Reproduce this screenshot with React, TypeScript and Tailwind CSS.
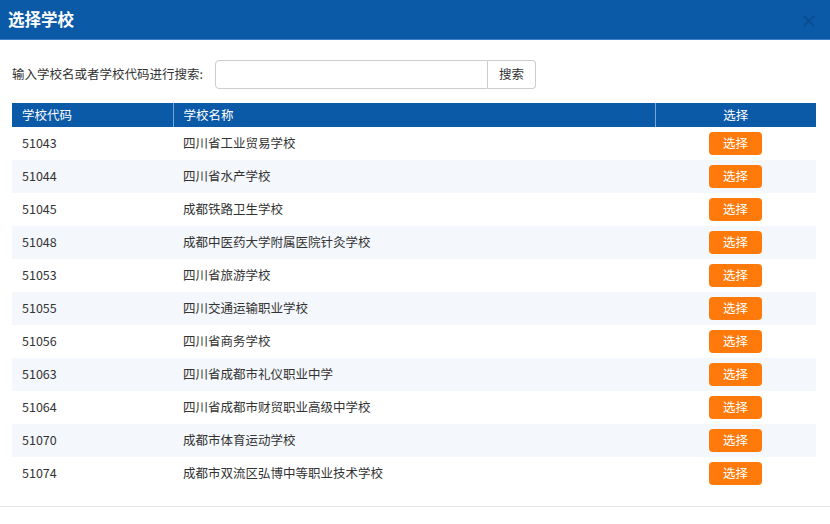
import React from 'react';

interface School {
  code: string;
  name: string;
}

const schools: School[] = [
  { code: '51043', name: '四川省工业贸易学校' },
  { code: '51044', name: '四川省水产学校' },
  { code: '51045', name: '成都铁路卫生学校' },
  { code: '51048', name: '成都中医药大学附属医院针灸学校' },
  { code: '51053', name: '四川省旅游学校' },
  { code: '51055', name: '四川交通运输职业学校' },
  { code: '51056', name: '四川省商务学校' },
  { code: '51063', name: '四川省成都市礼仪职业中学' },
  { code: '51064', name: '四川省成都市财贸职业高级中学校' },
  { code: '51070', name: '成都市体育运动学校' },
  { code: '51074', name: '成都市双流区弘博中等职业技术学校' },
];

const font = "font-['Noto_Sans_CJK_SC','Noto_Sans',sans-serif]";

export default function App() {
  return (
    <div className={`w-[830px] h-[524px] bg-white overflow-hidden ${font}`}>
      {/* Header */}
      <div className="h-[40px] bg-[#0b5aa8] border-b border-[#3d7fc2] flex items-center justify-between pl-[8px] pr-[12px]">
        <h2 className="text-white text-[16.5px] font-bold leading-none">选择学校</h2>
        <span className="text-[#0a4785] text-[18px] font-bold leading-none opacity-70">×</span>
      </div>

      <div className="px-[12px]">
        {/* Search */}
        <div className="flex items-center h-[63px] pt-[5px]">
          <label className="text-[12.5px] text-[#333] mr-[12px]">输入学校名或者学校代码进行搜索:</label>
          <div className="flex h-[29px]">
            <input className="w-[273px] h-full border border-[#ccc] rounded-l-[4px] outline-none px-2" />
            <button className="w-[48px] h-full border border-l-0 border-[#ccc] rounded-r-[4px] bg-white text-[12.5px] text-[#333]">
              搜索
            </button>
          </div>
        </div>

        {/* Table */}
        <table className="w-[804px] border-collapse text-[12.5px]">
          <thead>
            <tr className="bg-[#0b5aa8] text-white h-[24px]">
              <th className="w-[161px] text-left font-normal pl-[10px] border-r border-[#7aa6d6]">学校代码</th>
              <th className="text-left font-normal pl-[10px] border-r border-[#7aa6d6]">学校名称</th>
              <th className="w-[161px] font-normal">选择</th>
            </tr>
          </thead>
          <tbody>
            {schools.map((s, i) => (
              <tr key={s.code} className={`h-[33px] ${i % 2 === 1 ? 'bg-[#f4f7fb]' : 'bg-white'} text-[#333]`}>
                <td className="pl-[10px]">{s.code}</td>
                <td className="pl-[10px]">{s.name}</td>
                <td className="text-center">
                  <button className="w-[53px] h-[23px] rounded-[4px] bg-[#ff7a0a] text-white text-[12.5px] leading-none">
                    选择
                  </button>
                </td>
              </tr>
            ))}
          </tbody>
        </table>
      </div>

      {/* Footer */}
      <div className="mt-[16px] border-t border-[#e5e5e5]" />
    </div>
  );
}
